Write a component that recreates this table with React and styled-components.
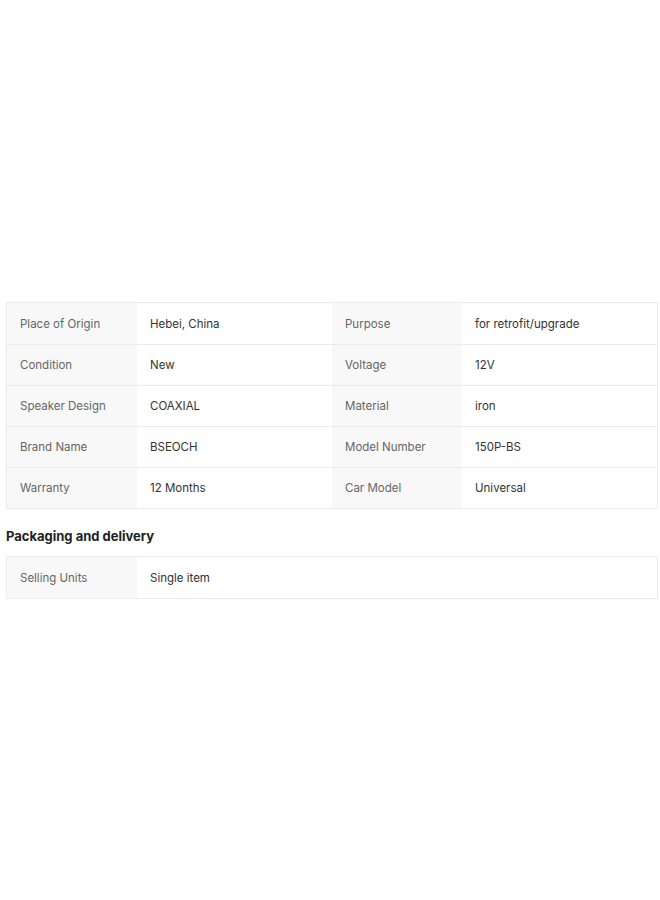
import React from "react";
import styled, { createGlobalStyle } from "styled-components";

const Global = createGlobalStyle`
  html, body { margin: 0; padding: 0; background: #fff; }
  body { font-family: Inter, "Noto Sans", Arial, sans-serif; -webkit-font-smoothing: antialiased; }
`;

const Page = styled.div`
  padding: 302px 2px 0 6px;
  width: 652px;
`;

const Table = styled.div`
  display: grid;
  grid-template-columns: ${(p) => (p.$cols === 2 ? "130px 1fr" : "130px 195px 130px 1fr")};
  border: 1px solid #ececec;
`;

const Cell = styled.div`
  display: flex;
  align-items: center;
  box-sizing: border-box;
  padding-left: 13px;
  font-size: 11.5px;
  background: ${(p) => (p.$label ? "#f8f8f8" : "#fff")};
  color: ${(p) => (p.$label ? "#666" : "#333")};
  border-top: ${(p) => (p.$first ? "none" : "1px solid #ececec")};
  height: 41px;
`;

const Heading = styled.h3`
  margin: 0;
  padding: 19px 0 12px;
  font-size: 13px;
  font-weight: 700;
  color: #222;
  line-height: 16px;
`;

const attrs = [
  ["Place of Origin", "Hebei, China", "Purpose", "for retrofit/upgrade"],
  ["Condition", "New", "Voltage", "12V"],
  ["Speaker Design", "COAXIAL", "Material", "iron"],
  ["Brand Name", "BSEOCH", "Model Number", "150P-BS"],
  ["Warranty", "12 Months", "Car Model", "Universal"],
];

export default function App() {
  return (
    <>
      <Global />
      <Page>
        <Table>
          {attrs.map((row, i) =>
            row.map((t, j) => (
              <Cell key={`${i}-${j}`} $label={j % 2 === 0} $first={i === 0}>
                {t}
              </Cell>
            ))
          )}
        </Table>
        <Heading>Packaging and delivery</Heading>
        <Table $cols={2}>
          <Cell $label $first>Selling Units</Cell>
          <Cell $first>Single item</Cell>
        </Table>
      </Page>
    </>
  );
}
